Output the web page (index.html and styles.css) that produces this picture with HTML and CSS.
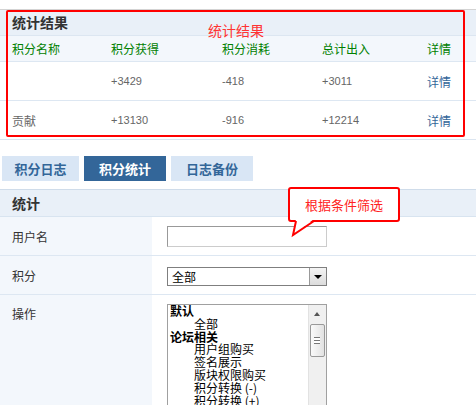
FILE: index.html
```html
<!DOCTYPE html>
<html lang="zh-CN">
<head>
    <meta charset="UTF-8">
    <meta name="viewport" content="width=device-width, initial-scale=1.0">
    <title>积分统计</title>
    <link rel="stylesheet" href="styles.css">
</head>
<body>

<div class="stats">
    <!-- 统计结果表 -->
    <div class="result">
        <div class="result-title">统计结果</div>
        <div class="result-row result-head">
            <span>积分名称</span>
            <span>积分获得</span>
            <span>积分消耗</span>
            <span>总计出入</span>
            <span>详情</span>
        </div>
        <div class="result-row">
            <span></span>
            <span>+3429</span>
            <span>-418</span>
            <span>+3011</span>
            <a href="#" class="more">详情</a>
        </div>
        <div class="result-row">
            <span>贡献</span>
            <span>+13130</span>
            <span>-916</span>
            <span>+12214</span>
            <a href="#" class="more">详情</a>
        </div>
    </div>
    <div class="mark-box"></div>
    <span class="mark-label">统计结果</span>
</div>

<!-- 标签 -->
<div class="tabs">
    <a href="#" class="tab tab-first">积分日志</a>
    <a href="#" class="tab active">积分统计</a>
    <a href="#" class="tab">日志备份</a>
</div>

<div class="filter-wrap">
    <div class="filter">
        <div class="filter-title">统计</div>
        <div class="filter-row">
            <div class="filter-label">用户名</div>
            <div class="filter-field"><input type="text" class="txt"></div>
        </div>
        <div class="filter-row">
            <div class="filter-label">积分</div>
            <div class="filter-field">
                <div class="dropdown">
                    <span>全部</span>
                    <span class="dropdown-btn"></span>
                </div>
            </div>
        </div>
        <div class="filter-row filter-row-top">
            <div class="filter-label">操作</div>
            <div class="filter-field">
                <div class="listbox">
                    <ul class="listbox-items">
                        <li class="group">默认</li>
                        <li>全部</li>
                        <li class="group">论坛相关</li>
                        <li>用户组购买</li>
                        <li>签名展示</li>
                        <li>版块权限购买</li>
                        <li>积分转换 (-)</li>
                        <li>积分转换 (+)</li>
                    </ul>
                    <div class="scrollbar">
                        <span class="scroll-up"></span>
                        <span class="scroll-thumb"></span>
                    </div>
                </div>
            </div>
        </div>
    </div>

    <!-- 提示气泡 -->
    <div class="callout">
        根据条件筛选
        <svg class="callout-tail" width="30" height="20" viewBox="0 0 30 20">
            <polygon points="8,1 5,17 26,1" fill="#fff"/>
            <polyline points="8,3 5,17 26,3" fill="none" stroke="#f00" stroke-width="2" stroke-linejoin="miter"/>
        </svg>
    </div>
</div>

</body>
</html>
```

FILE: styles.css
```css
body {
    margin: 0;
    padding: 0;
    background: #fff;
    color: #333;
    font-family: "Liberation Sans", "Noto Sans CJK SC", sans-serif;
    font-size: 12px;
    overflow: hidden;
}
a {
    text-decoration: none;
}

/* 统计结果 */
.stats {
    position: relative;
    padding-top: 9px;
}
.result {
    border-top: 1px solid #d3d3d3;
    border-bottom: 1px solid #dbe5f0;
}
.result-title {
    height: 25px;
    line-height: 25px;
    padding-left: 12px;
    background: #e9f0f8;
    border-bottom: 1px solid #dce6f1;
    font-family: "Noto Sans CJK SC", sans-serif;
    font-size: 14px;
    font-weight: bold;
    color: #333;
}
.result-row {
    display: grid;
    grid-template-columns: 99px 111px 100px 105px 1fr;
    align-items: center;
    height: 38px;
    border-bottom: 1px solid #dde7f2;
    color: #666;
    font-size: 11px;
}
.result-row:last-child {
    border-bottom: none;
}
.result-row span,
.result-row a {
    padding-left: 12px;
}
.result-row span:first-child {
    font-family: "Noto Sans CJK SC", sans-serif;
    font-size: 12px;
}
.result-head {
    height: 25px;
    background: #f3f7fc;
    color: #008000;
    font-family: "Noto Sans CJK SC", sans-serif;
    font-size: 12px;
}
.more {
    color: #336699;
    font-family: "Noto Sans CJK SC", sans-serif;
    font-size: 12px;
}
.mark-box {
    position: absolute;
    left: 6px;
    top: 10px;
    width: 455px;
    height: 123px;
    border: 2px solid #f00;
    border-radius: 2px;
}
.mark-label {
    position: absolute;
    left: 208px;
    top: 20px;
    line-height: 20px;
    font-family: "Noto Sans CJK SC", sans-serif;
    font-size: 14px;
    color: #f33;
}

/* 标签 */
.tabs {
    display: flex;
    gap: 5px;
    margin-top: 16px;
    padding-left: 2px;
}
.tab {
    width: 82px;
    height: 25px;
    line-height: 25px;
    text-align: center;
    background: #d9e6f5;
    color: #336699;
    font-family: "Noto Sans CJK SC", sans-serif;
    font-size: 13px;
    font-weight: bold;
}
.tab-first {
    width: 77px;
}
.tab.active {
    background: #336699;
    color: #fff;
}

/* 筛选表单 */
.filter-wrap {
    position: relative;
    margin-top: 8px;
}
.filter {
    border-top: 1px solid #cfdcea;
    font-family: "Noto Sans CJK SC", sans-serif;
}
.filter-title {
    height: 26px;
    line-height: 26px;
    padding-left: 12px;
    background: #e9f0f8;
    border-bottom: 1px solid #d8e4f0;
    font-size: 14px;
    font-weight: bold;
    color: #333;
}
.filter-row {
    display: flex;
    align-items: stretch;
    border-bottom: 1px solid #dde7f2;
}
.filter-label {
    width: 140px;
    padding-left: 12px;
    background: #f3f7fc;
    display: flex;
    align-items: center;
    height: 38px;
    font-size: 12px;
    color: #333;
}
.filter-field {
    display: flex;
    align-items: center;
    padding-left: 15px;
}
.filter-row-top {
    border-bottom: none;
}
.filter-row-top .filter-label {
    align-items: flex-start;
    padding-top: 10px;
    height: 110px;
}
.filter-row-top .filter-field {
    align-items: flex-start;
    padding-top: 9px;
}
.txt {
    box-sizing: border-box;
    width: 160px;
    height: 21px;
    margin: 0;
    border: 1px solid #ccc;
    border-top-color: #999;
    border-left-color: #999;
    outline: none;
}
.dropdown {
    box-sizing: border-box;
    display: flex;
    align-items: center;
    justify-content: space-between;
    width: 160px;
    height: 19px;
    margin-top: 2px;
    padding-left: 4px;
    border: 1px solid #7f7f7f;
    color: #000;
    font-size: 12px;
}
.dropdown-btn {
    position: relative;
    width: 16px;
    height: 17px;
    border-left: 1px solid #999;
    background: linear-gradient(#f4f4f4, #dcdcdc);
}
.dropdown-btn::after {
    content: "";
    position: absolute;
    left: 4px;
    top: 7px;
    border-left: 4px solid transparent;
    border-right: 4px solid transparent;
    border-top: 4px solid #000;
}
.listbox {
    box-sizing: border-box;
    display: flex;
    width: 160px;
    height: 110px;
    border: 1px solid #a0a0a0;
    overflow: hidden;
}
.listbox-items {
    flex: 1;
    margin: 0;
    padding: 0 0 0 2px;
    list-style: none;
    color: #000;
    font-size: 12px;
    line-height: 12.8px;
}
.listbox-items li {
    padding-left: 24px;
    white-space: nowrap;
}
.listbox-items .group {
    padding-left: 0;
    font-weight: bold;
}
.scrollbar {
    position: relative;
    width: 17px;
    background: #f0f0f0;
    border-left: 1px solid #e2e2e2;
}
.scroll-up {
    position: absolute;
    left: 5px;
    top: 7px;
    border-left: 3px solid transparent;
    border-right: 3px solid transparent;
    border-bottom: 4px solid #555;
}
.scroll-thumb {
    position: absolute;
    left: 1px;
    top: 19px;
    width: 13px;
    height: 31px;
    border: 1px solid #999;
    border-radius: 2px;
    background: linear-gradient(90deg, #fafafa, #e2e2e2);
}
.scroll-thumb::after {
    content: "";
    position: absolute;
    left: 3px;
    top: 12px;
    width: 6px;
    height: 5px;
    border-top: 1px solid #777;
    border-bottom: 1px solid #777;
    background: linear-gradient(#fff 2px, #777 2px, #777 3px, #fff 3px);
}

/* 提示气泡 */
.callout {
    position: absolute;
    left: 288px;
    top: -2px;
    box-sizing: border-box;
    width: 112px;
    height: 35px;
    line-height: 31px;
    text-align: center;
    background: #fff;
    border: 2px solid #f00;
    border-radius: 3px;
    color: #f22;
    font-family: "Noto Sans CJK SC", sans-serif;
    font-size: 13px;
}
.callout-tail {
    position: absolute;
    left: -2px;
    top: 29px;
}
```
